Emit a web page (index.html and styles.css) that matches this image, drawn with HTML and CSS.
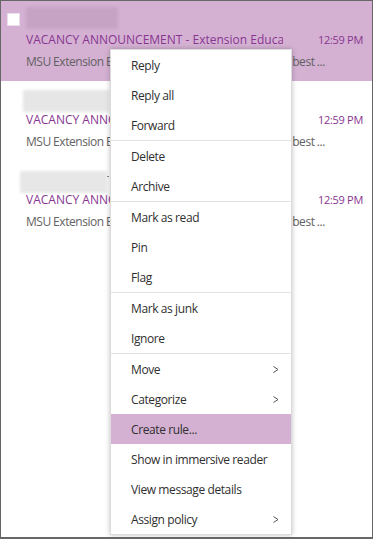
FILE: index.html
```html
<!DOCTYPE html>
<html>
<head>
<meta charset="utf-8">
<link rel="stylesheet" href="styles.css">
</head>
<body>
<div class="frame">
  <div class="list">
    <div class="row row-selected">
      <span class="check"></span>
      <div class="content">
        <div class="sender sender-1"></div>
        <div class="subject-line"><span class="subject">VACANCY ANNOUNCEMENT - Extension Educator Position</span><span class="time">12:59 PM</span></div>
        <div class="preview">MSU Extension Educator position openings. Join the best ...</div>
      </div>
    </div>
    <div class="row">
      <span class="check check-empty"></span>
      <div class="content">
        <div class="sender sender-2"></div>
        <div class="subject-line"><span class="subject">VACANCY ANNOUNCEMENT - Extension Educator Position</span><span class="time">12:59 PM</span></div>
        <div class="preview">MSU Extension Educator position openings. Join the best ...</div>
      </div>
    </div>
    <div class="row">
      <span class="check check-empty"></span>
      <div class="content">
        <div class="sender-wrap"><div class="sender sender-3"></div><span class="tick"></span></div>
        <div class="subject-line"><span class="subject">VACANCY ANNOUNCEMENT - Extension Educator Position</span><span class="time">12:59 PM</span></div>
        <div class="preview">MSU Extension Educator position openings. Join the best ...</div>
      </div>
    </div>
  </div>

  <div class="menu">
    <div class="group">
      <div class="item">Reply</div>
      <div class="item">Reply all</div>
      <div class="item">Forward</div>
    </div>
    <div class="group">
      <div class="item">Delete</div>
      <div class="item">Archive</div>
    </div>
    <div class="group">
      <div class="item">Mark as read</div>
      <div class="item">Pin</div>
      <div class="item">Flag</div>
    </div>
    <div class="group">
      <div class="item">Mark as junk</div>
      <div class="item">Ignore</div>
    </div>
    <div class="group">
      <div class="item">Move<svg class="chev" width="6" height="7" viewBox="0 0 6 7"><polyline points="0.5,0.5 5,3.5 0.5,6.5" fill="none" stroke="#555" stroke-width="1"/></svg></div>
      <div class="item">Categorize<svg class="chev" width="6" height="7" viewBox="0 0 6 7"><polyline points="0.5,0.5 5,3.5 0.5,6.5" fill="none" stroke="#555" stroke-width="1"/></svg></div>
      <div class="item item-active">Create rule...</div>
      <div class="item">Show in immersive reader</div>
      <div class="item">View message details</div>
      <div class="item">Assign policy<svg class="chev" width="6" height="7" viewBox="0 0 6 7"><polyline points="0.5,0.5 5,3.5 0.5,6.5" fill="none" stroke="#555" stroke-width="1"/></svg></div>
    </div>
  </div>
</div>
</body>
</html>
```

FILE: styles.css
```css
html, body {
  margin: 0;
  padding: 0;
  background: #fff;
}

body {
  font-family: "Open Sans", "Noto Sans", sans-serif;
}

.frame {
  position: relative;
  width: 373px;
  height: 539px;
  box-sizing: border-box;
  border: 1px solid #676767;
  border-bottom-width: 2px;
  background: #fff;
  overflow: hidden;
}

.list {
  display: flex;
  flex-direction: column;
}

.row {
  display: flex;
  height: 80px;
  box-sizing: border-box;
  padding-left: 6px;
}

.row-selected {
  background: #d4b1d3;
}

.check {
  flex: none;
  width: 13px;
  height: 13px;
  box-sizing: border-box;
  margin: 12px 6px 0 0;
  background: #fff;
  border: 1px solid #eadfea;
}

.check-empty {
  visibility: hidden;
}

.content {
  flex: 1;
  min-width: 0;
  padding-right: 9px;
}

.sender {
  height: 22px;
  filter: blur(1.5px);
}

.sender-1 {
  width: 92px;
  margin: 6px 0 3px 0;
  background: #c6a3c5;
}

.sender-2 {
  width: 86px;
  margin: 9px 0 0 -3px;
  background: #e6e6e6;
}

.sender-wrap {
  display: flex;
  align-items: flex-start;
  margin: 10px 0 -1px -6px;
}

.sender-3 {
  width: 87px;
  background: #e7e7e7;
}

.tick {
  width: 2px;
  height: 1px;
  margin-top: 5px;
  background: #666;
}

.subject-line {
  display: flex;
  align-items: baseline;
  height: 16px;
  line-height: 16px;
}

.subject {
  flex: 1;
  min-width: 0;
  overflow: hidden;
  white-space: nowrap;
  font-size: 12px;
  color: #883590;
}

.time {
  flex: none;
  margin-left: 35px;
  font-size: 11px;
  letter-spacing: -0.3px;
  color: #883590;
}

.preview {
  margin-top: 6px;
  line-height: 16px;
  font-size: 12px;
  letter-spacing: -0.45px;
  word-spacing: -0.35px;
  color: #626262;
  white-space: nowrap;
  overflow: hidden;
}

.menu {
  position: absolute;
  left: 109px;
  top: 48px;
  width: 182px;
  box-sizing: border-box;
  background: #fff;
  border: 1px solid #dcdcdc;
  box-shadow: 0 0 5px rgba(0, 0, 0, 0.25);
}

.group + .group {
  border-top: 1px solid #e3e3e3;
}

.item {
  display: flex;
  align-items: center;
  justify-content: space-between;
  height: 30px;
  box-sizing: border-box;
  padding: 1px 12px 0 20px;
  line-height: 29px;
  font-size: 12px;
  letter-spacing: -0.4px;
  color: #2f2f2f;
  white-space: nowrap;
}

.item-active {
  background: #d4b1d3;
}

.chev {
  flex: none;
  display: block;
}
```
